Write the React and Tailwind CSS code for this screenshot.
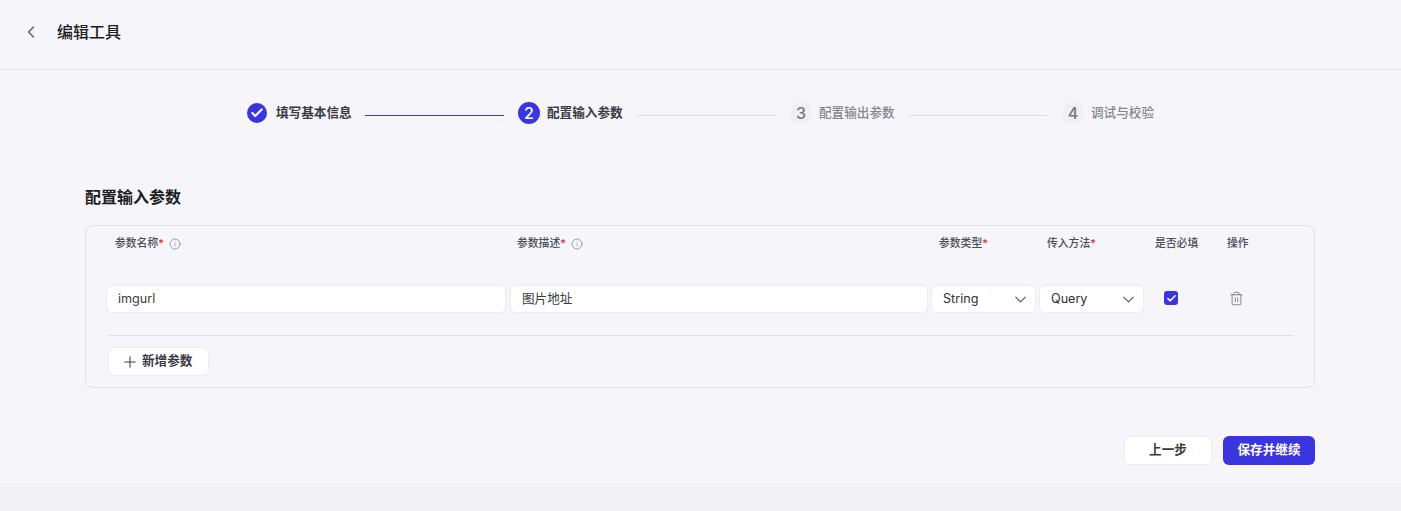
import { Check, ChevronDown, ChevronLeft, Info, Plus, Trash2 } from 'lucide-react';

const FONT = "font-['Inter','Noto_Sans_CJK_SC',sans-serif]";

export default function App() {
  return (
    <div className={`flex h-[511px] flex-col overflow-hidden bg-[#f2f2f5] ${FONT}`}>
      <div className="h-[483px] bg-[#f5f5fa]">
        <header className="flex h-[70px] items-center border-b border-[#e3e3e8] pb-[6px] pl-[21px]">
          <ChevronLeft size={20} strokeWidth={1.7} className="text-[#5f5f68]" />
          <h1 className="ml-[16px] text-base leading-6 font-medium text-[#1c1c22]">编辑工具</h1>
        </header>

        <div className="flex h-[87px] items-start pt-[32px] pl-[247px]">
          <Step done label="填写基本信息" width="w-[118px]" />
          <div className="mt-[13px] mr-[14px] h-px w-[139px] bg-[#3b35e0]" />
          <Step num="2" active label="配置输入参数" width="w-[119px]" />
          <div className="mt-[13px] mr-[14px] h-px w-[139px] bg-[#dcdce3]" />
          <Step num="3" label="配置输出参数" width="w-[119px]" />
          <div className="mt-[13px] mr-[15px] h-px w-[138px] bg-[#dcdce3]" />
          <Step num="4" label="调试与校验" />
        </div>

        <main className="pr-[86px] pl-[85px]">
          <h2 className="pt-[28px] text-base leading-[24px] font-semibold text-[#1c1c22]">配置输入参数</h2>
          <section className="mt-[16px] h-[163px] rounded-lg border border-[#e0e0e6] px-[20px]">
            <div className="grid h-[59px] grid-cols-[404px_421px_108px_108px_72px_60px] items-start pt-[10px] text-[10.8px] leading-[15px] font-medium text-[#4d4d56]">
              <Label className="pl-[9px]" text="参数名称" required info />
              <Label className="pl-[7px]" text="参数描述" required info />
              <Label className="pl-[8px]" text="参数类型" required />
              <Label className="pl-[8px]" text="传入方法" required />
              <Label className="pl-[8px]" text="是否必填" />
              <Label className="pl-[8px]" text="操作" />
            </div>

            <div className="grid grid-cols-[404px_421px_108px_108px_72px_60px] items-center">
              <Field className="w-[400px] pl-[11px]" value="imgurl" />
              <Field className="w-[418px] pl-[11px]" value="图片地址" />
              <Select value="String" />
              <Select value="Query" />
              <div className="-mt-[2px] pl-[17px]">
                <div className="flex h-[14px] w-[14px] items-center justify-center rounded-[3px] bg-[#3b35e0]">
                  <Check size={11} strokeWidth={3.5} className="text-white" />
                </div>
              </div>
              <div className="-mt-[2px] pl-[10px]">
                <Trash2 size={15} strokeWidth={1.3} className="text-[#6f6f78]" />
              </div>
            </div>

            <div className="mt-[22px] ml-[2px] h-px w-[1185px] bg-[#e0e0e6]" />

            <button className="mt-[11px] ml-[2px] flex h-[29px] w-[101px] items-center rounded-md border border-[#ececf1] bg-white pl-[12px] text-[12.6px] font-semibold text-[#3a3a42]">
              <Plus size={18} strokeWidth={1.4} className="text-[#3a3a42]" />
              <span className="ml-[3px]">新增参数</span>
            </button>
          </section>

          <div className="mt-[48px] flex justify-end gap-[11px]">
            <button className="h-[29px] w-[88px] rounded-md border border-[#ececf1] bg-white text-[12.6px] font-semibold text-[#3a3a42]">上一步</button>
            <button className="h-[29px] w-[92px] rounded-md bg-[#3b35e0] text-[12.6px] font-semibold text-white">保存并继续</button>
          </div>
        </main>
      </div>
    </div>
  );
}

function Step({ done, active, num, label, width }) {
  return (
    <div className={`flex shrink-0 items-start ${width || ''}`}>
      {done ? (
        <div className="mt-[1px] flex h-5 w-5 items-center justify-center rounded-full bg-[#3b35e0]">
          <Check size={14} strokeWidth={3.5} className="text-white" />
        </div>
      ) : (
        <div className={`flex h-[22px] w-[22px] items-center justify-center rounded-full text-base font-medium ${active ? 'bg-[#3b35e0] text-white' : 'bg-[#efeff4] text-[#77777f]'}`}>
          {num}
        </div>
      )}
      <span className={`text-[12.6px] leading-[22px] ${done ? 'ml-[9px]' : 'ml-[7px]'} ${done || active ? 'font-semibold text-[#3a3a42]' : 'font-medium text-[#85858e]'}`}>
        {label}
      </span>
    </div>
  );
}

function Label({ text, required, info, className }) {
  return (
    <div className={`flex items-center ${className}`}>
      <span>{text}</span>
      {required && <span className="text-[#e5141e]">*</span>}
      {info && <Info size={12} strokeWidth={1} className="mt-[1px] ml-[5px] text-[#55555e]" />}
    </div>
  );
}

function Field({ value, className }) {
  return (
    <div className={`flex h-[28px] items-center rounded-md border border-[#ececf1] bg-white text-[12.6px] text-[#3a3a42] ${className}`}>
      {value}
    </div>
  );
}

function Select({ value }) {
  return (
    <div className="flex h-[28px] w-[105px] items-center justify-between rounded-md border border-[#ececf1] bg-white pr-[5px] pl-[11px] text-[12.6px] text-[#2f2f36]">
      <span>{value}</span>
      <ChevronDown size={19} strokeWidth={1.4} className="text-[#55555e]" />
    </div>
  );
}
